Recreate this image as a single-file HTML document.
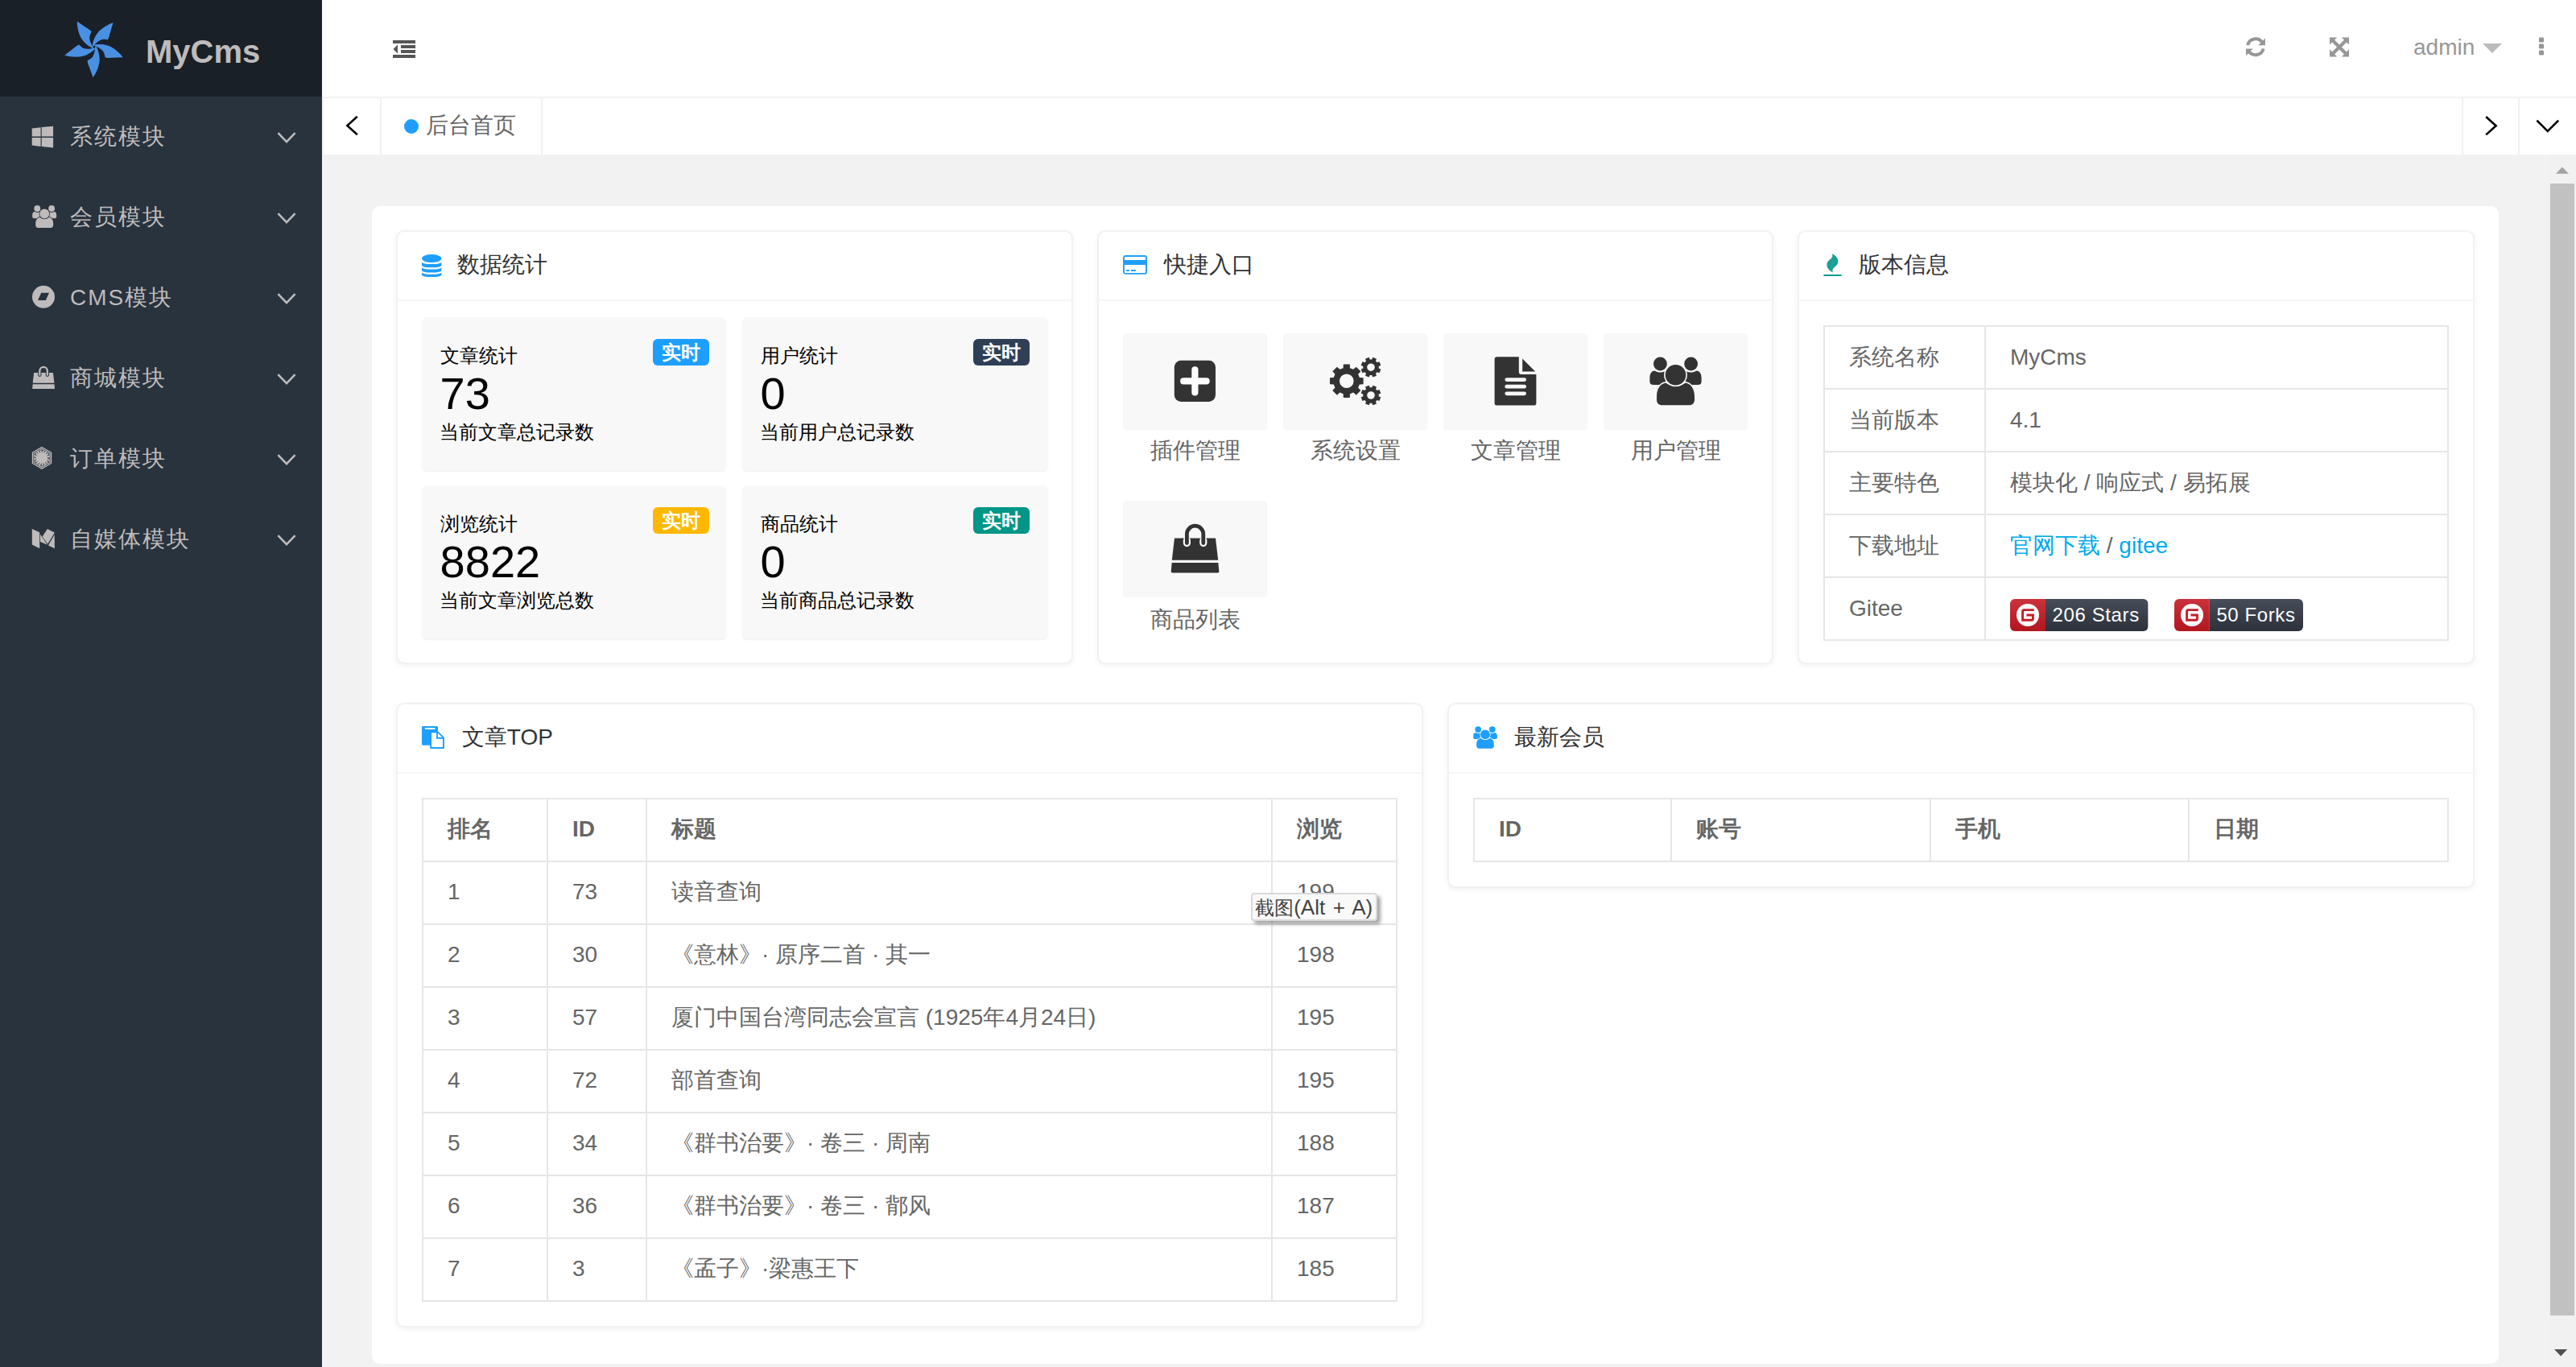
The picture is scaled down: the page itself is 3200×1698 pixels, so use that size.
<!DOCTYPE html>
<html><head><meta charset="utf-8">
<style>
*{box-sizing:border-box;margin:0;padding:0}
html,body{width:1600px;height:849px;overflow:hidden;font-family:"Liberation Sans",sans-serif;background:#f2f2f2}
.abs{position:absolute}
svg{display:block;position:absolute;overflow:visible}
#side{position:absolute;left:0;top:0;width:200px;height:849px;background:#28333E}
#logo{position:absolute;left:0;top:0;width:200px;height:60px;background:#192027}
#logo .t{position:absolute;left:90.5px;top:20.5px;font-size:20px;font-weight:bold;color:rgb(191,187,187);line-height:23px}
.mi{position:absolute;left:0;width:200px;height:50px}
.mi .t{position:absolute;left:43.5px;top:0;line-height:50px;font-size:14px;letter-spacing:1px;color:rgb(191,187,187);white-space:nowrap}
#header{position:absolute;left:200px;top:0;width:1400px;height:61px;background:#fff;border-bottom:1px solid #f2f2f2}
#admin{position:absolute;left:1299px;top:21.5px;font-size:14px;color:#979797;line-height:16px}
#tabs{position:absolute;left:200px;top:61px;width:1400px;height:35px;background:#fff;border-left:1px solid #f2f2f2}
.tabtxt{position:absolute;left:264.5px;top:69px;font-size:14px;color:#666;line-height:18px;white-space:nowrap}
#outer{position:absolute;left:231px;top:128px;width:1321px;height:719px;background:#fff;border-radius:5px}
.card{position:absolute;background:#fff;border:1px solid #f2f2f2;border-radius:5px;box-shadow:0 1px 3px 0 rgba(0,0,0,.06)}
.card .hd{position:absolute;left:0;top:0;right:0;height:43px;border-bottom:1px solid #f6f6f6}
.card .ht{position:absolute;top:-0.5px;line-height:42px;font-size:14px;color:#333;white-space:nowrap}
.box{position:absolute;background:#f8f8f8;border-radius:3px;box-shadow:0 1px 1px rgba(0,0,0,.05)}
.box .a{position:absolute;left:11.4px;top:15.4px;font-size:12px;line-height:17px;color:#000;white-space:nowrap}
.box .n{position:absolute;left:11.3px;top:31.4px;font-size:28px;line-height:32px;color:#000;white-space:nowrap}
.box .d{position:absolute;left:10.9px;top:63.1px;font-size:12px;line-height:17px;color:#000;white-space:nowrap}
.badge{position:absolute;top:13px;left:143px;width:35px;height:16.5px;border-radius:3px;color:#fff;font-size:12px;font-weight:bold;line-height:17px;text-align:center;transform:translate(0.5px,0.5px)}
.q{position:absolute;width:89.5px;height:60px;background:#f8f8f8;border-radius:2px}
.ql{position:absolute;width:89.5px;text-align:center;font-size:14px;color:#666;line-height:20px;white-space:nowrap}
table{border-collapse:separate;border-spacing:0;position:absolute;table-layout:fixed;border-left:1px solid transparent;border-top:1px solid transparent}
td,th{border-right:1px solid transparent;border-bottom:1px solid transparent;padding:9px 15px;line-height:20px;font-size:14px;color:#666;text-align:left;white-space:nowrap;overflow:visible;font-weight:normal;height:39px}
th{font-weight:bold}
a{color:#01AAED;text-decoration:none}
.gbt{font-size:12px;letter-spacing:0.3px;color:#fff;line-height:14px;white-space:nowrap}
.tip{left:776.8px;top:554.3px;width:78.6px;height:17.5px;background:#f9f9f9;border:1px solid #d9d9d9;border-radius:2px;box-shadow:2px 2px 2px rgba(0,0,0,.35);font-size:13px;color:#444;line-height:16.5px;padding-left:1.8px;word-spacing:1.2px;white-space:nowrap}
@media (min-width:2400px){html{zoom:2}}
#sb{position:absolute;left:1583px;top:96px;width:17px;height:753px;background:#f1f1f1}
</style></head><body>

<!-- SIDEBAR -->
<div id="side">
  <div id="logo">
    <div class="t">MyCms</div>
<svg style="left:38px;top:9px" width="42" height="42" viewBox="-20.48 -20.08 42 42"><g fill="#4A90E2"><path transform="rotate(20.25)" d="M-0.94,-0.77 C1.4,-2.5 5.2,-3.75 8.41,-3.69 C11.6,-3.65 16.3,-2 19.09,0 L14.77,1.66 L10.32,3.56 L8.61,3.86 C8.1,2.6 7,1.2 6.06,0.6 C4.5,-0.3 1.5,-0.7 -0.94,-0.77Z"/><path transform="rotate(92.25)" d="M-0.94,-0.77 C1.4,-2.5 5.2,-3.75 8.41,-3.69 C11.6,-3.65 16.3,-2 19.09,0 L14.77,1.66 L10.32,3.56 L8.61,3.86 C8.1,2.6 7,1.2 6.06,0.6 C4.5,-0.3 1.5,-0.7 -0.94,-0.77Z"/><path transform="rotate(164.25)" d="M-0.94,-0.77 C1.4,-2.5 5.2,-3.75 8.41,-3.69 C11.6,-3.65 16.3,-2 19.09,0 L14.77,1.66 L10.32,3.56 L8.61,3.86 C8.1,2.6 7,1.2 6.06,0.6 C4.5,-0.3 1.5,-0.7 -0.94,-0.77Z"/><path transform="rotate(236.25)" d="M-0.94,-0.77 C1.4,-2.5 5.2,-3.75 8.41,-3.69 C11.6,-3.65 16.3,-2 19.09,0 L14.77,1.66 L10.32,3.56 L8.61,3.86 C8.1,2.6 7,1.2 6.06,0.6 C4.5,-0.3 1.5,-0.7 -0.94,-0.77Z"/><path transform="rotate(308.25)" d="M-0.94,-0.77 C1.4,-2.5 5.2,-3.75 8.41,-3.69 C11.6,-3.65 16.3,-2 19.09,0 L14.77,1.66 L10.32,3.56 L8.61,3.86 C8.1,2.6 7,1.2 6.06,0.6 C4.5,-0.3 1.5,-0.7 -0.94,-0.77Z"/></g></svg>
  </div>
  <div class="mi" style="top:60px"><div class="t">系统模块</div></div>
  <div class="mi" style="top:110px"><div class="t">会员模块</div></div>
  <div class="mi" style="top:160px"><div class="t">CMS模块</div></div>
  <div class="mi" style="top:210px"><div class="t">商城模块</div></div>
  <div class="mi" style="top:260px"><div class="t">订单模块</div></div>
  <div class="mi" style="top:310px"><div class="t">自媒体模块</div></div>
<svg style="left:19px;top:78px;transform:translate(0.85px,0.35px)" width="13.2" height="13.4" viewBox="0 0 26.4 26.8" ><g fill="rgb(191,187,187)"><path d="M0,2.8 L10.9,1.5 L10.9,12.8 L0,12.8Z"/><path d="M12,1.35 L26.4,0 L26.4,12.8 L12,12.8Z"/><path d="M0,14.3 L10.9,14.3 L10.9,25.2 L0,23.8Z"/><path d="M12,14.3 L26.4,14.3 L26.4,26.8 L12,25.3Z"/></g></svg><svg style="left:20px;top:127px;transform:translate(0px,0.3px)" width="15.2" height="14.3" viewBox="0 0 32.5 30" ><g fill="rgb(191,187,187)"><circle cx="6.7" cy="4.4" r="4.2"/><circle cx="25.8" cy="4.4" r="4.2"/><path d="M0.2,13 C0.2,10.3 1.6,8.7 3.4,8.7 C4.4,9.4 5.5,9.7 6.7,9.7 C7.9,9.7 9,9.4 10,8.7 L10,17.4 L2.4,17.4 C1,17.4 0.2,16.6 0.2,15.4 Z"/><path d="M32.3,13 C32.3,10.3 30.9,8.7 29.1,8.7 C28.1,9.4 27,9.7 25.8,9.7 C24.6,9.7 23.5,9.4 22.5,8.7 L22.5,17.4 L30.1,17.4 C31.5,17.4 32.3,16.6 32.3,15.4 Z"/></g><g fill="rgb(191,187,187)" stroke="#28333E" stroke-width="1.6" paint-order="stroke fill"><path d="M4.5,24.6 C4.5,19.6 7.2,16.3 10.3,16.3 C12,17.6 14.1,18.4 16.25,18.4 C18.4,18.4 20.5,17.6 22.2,16.3 C25.3,16.3 28,19.6 28,24.6 L28,26.6 C28,28.7 26.7,30 24.6,30 L7.9,30 C5.8,30 4.5,28.7 4.5,26.6 Z"/><circle cx="16.25" cy="11.3" r="6.4"/></g></svg><svg style="left:20px;top:177px;transform:translate(0px,0.4px)" width="14" height="14" viewBox="0 0 14 14" ><circle cx="7" cy="7" r="7" fill="rgb(191,187,187)"/><path fill="#28333E" d="M5.6,4.5 L10.5,4.5 L8.4,9.1 L3.5,9.1Z"/></svg><svg style="left:20px;top:227px;transform:translate(0px,0.5px)" width="14.1" height="14" viewBox="0 0 30 30" ><path fill="rgb(191,187,187)" d="M2.2,8.6 L27.7,8.6 L29.3,22.2 L0.6,22.2 Z"/><path fill="rgb(191,187,187)" d="M0.55,23.8 L29.35,23.8 L29.9,29.2 Q29.95,30 29.1,30 L0.8,30 Q0,30 0.05,29.2 Z"/><path fill="none" stroke="#28333E" stroke-width="4.6" stroke-linecap="round" d="M9.9,11.6 L9.9,10"/><path fill="none" stroke="#28333E" stroke-width="4.6" stroke-linecap="round" d="M20.1,11.6 L20.1,10"/><path fill="none" stroke="rgb(191,187,187)" stroke-width="2.4" stroke-linecap="round" d="M9.9,11.6 L9.9,6 A5.1,5.1 0 0 1 20.1,6 L20.1,11.6"/></svg><svg style="left:20px;top:277px;transform:translate(0px,0.4px)" width="12" height="14" viewBox="0 0 12 14" ><path fill="none" stroke="rgb(191,187,187)" stroke-width="0.6" d="M6,0.3 L11.8,3.65 L11.8,10.35 L6,13.7 L0.2,10.35 L0.2,3.65Z"/><path fill="none" stroke="rgb(191,187,187)" stroke-width="0.6" d="M6,1.3 L10.94,4.15 L10.94,9.85 L6,12.7 L1.06,9.85 L1.06,4.15Z"/><circle cx="6" cy="7" r="4.8" fill="rgb(191,187,187)"/><g stroke="#28333E" stroke-width="0.45"><line x1="9.47" y1="7.49" x2="10.95" y2="7.7"/><line x1="9.03" y1="8.75" x2="10.33" y2="9.5"/><line x1="8.15" y1="9.76" x2="9.08" y2="10.94"/><line x1="6.96" y1="10.36" x2="7.38" y2="11.81"/><line x1="5.63" y1="10.48" x2="5.48" y2="11.97"/><line x1="4.36" y1="10.09" x2="3.65" y2="11.41"/><line x1="3.32" y1="9.25" x2="2.17" y2="10.21"/><line x1="2.67" y1="8.08" x2="1.24" y2="8.55"/><line x1="2.51" y1="6.76" x2="1.01" y2="6.65"/><line x1="2.85" y1="5.47" x2="1.51" y2="4.81"/><line x1="3.66" y1="4.4" x2="2.65" y2="3.28"/><line x1="4.8" y1="3.71" x2="4.29" y2="2.3"/><line x1="6.12" y1="3.5" x2="6.17" y2="2"/><line x1="7.42" y1="3.8" x2="8.03" y2="2.43"/><line x1="8.52" y1="4.57" x2="9.6" y2="3.53"/><line x1="9.25" y1="5.69" x2="10.64" y2="5.13"/><line x1="9.5" y1="7" x2="11" y2="7"/></g></svg><svg style="left:19px;top:328px;transform:translate(0.8px,0.4px)" width="14.25" height="12.3" viewBox="0 0 28.5 24.6" ><g fill="rgb(191,187,187)"><path d="M0.2,0.2 L9.6,4.4 L9.6,24.4 L0.2,19.8Z"/><path d="M10.3,6.6 L19.3,19.9 L10.5,16.2Z"/><path d="M19.3,0.2 L28.3,4.6 L19.7,18.9 L13,9.6Z"/><path d="M28.1,7.2 L28.3,24.4 L20.4,20.6Z"/></g></svg><svg style="left:172px;top:82px;transform:translate(0.7px,0.6px)" width="10.6" height="5.5" viewBox="0 0 10.6 5.5" ><path fill="none" stroke="rgb(191,187,187)" stroke-width="1.3" d="M0,0 L5.3,5.5 L10.6,0"/></svg><svg style="left:172px;top:132px;transform:translate(0.7px,0.6px)" width="10.6" height="5.5" viewBox="0 0 10.6 5.5" ><path fill="none" stroke="rgb(191,187,187)" stroke-width="1.3" d="M0,0 L5.3,5.5 L10.6,0"/></svg><svg style="left:172px;top:182px;transform:translate(0.7px,0.6px)" width="10.6" height="5.5" viewBox="0 0 10.6 5.5" ><path fill="none" stroke="rgb(191,187,187)" stroke-width="1.3" d="M0,0 L5.3,5.5 L10.6,0"/></svg><svg style="left:172px;top:232px;transform:translate(0.7px,0.6px)" width="10.6" height="5.5" viewBox="0 0 10.6 5.5" ><path fill="none" stroke="rgb(191,187,187)" stroke-width="1.3" d="M0,0 L5.3,5.5 L10.6,0"/></svg><svg style="left:172px;top:282px;transform:translate(0.7px,0.6px)" width="10.6" height="5.5" viewBox="0 0 10.6 5.5" ><path fill="none" stroke="rgb(191,187,187)" stroke-width="1.3" d="M0,0 L5.3,5.5 L10.6,0"/></svg><svg style="left:172px;top:332px;transform:translate(0.7px,0.6px)" width="10.6" height="5.5" viewBox="0 0 10.6 5.5" ><path fill="none" stroke="rgb(191,187,187)" stroke-width="1.3" d="M0,0 L5.3,5.5 L10.6,0"/></svg>
</div>

<!-- HEADER -->
<div id="header">
  <div id="admin">admin</div>
</div>

<!-- TABS -->
<div id="tabs"></div>
<div class="abs" style="left:236px;top:61px;width:1px;height:35px;background:#f2f2f2"></div>
<div class="abs" style="left:336px;top:61px;width:1px;height:35px;background:#f2f2f2"></div>
<div class="abs" style="left:1529px;top:61px;width:1px;height:35px;background:#f2f2f2"></div>
<div class="abs" style="left:1564px;top:61px;width:1px;height:35px;background:#f2f2f2"></div>
<div class="abs" style="left:251px;top:74px;width:9px;height:9px;border-radius:50%;background:#1e9fff"></div>
<div class="tabtxt">后台首页</div>

<!-- CONTENT -->
<div id="outer"></div>

<!-- card 1 -->
<div class="card" style="left:246px;top:143px;width:420.3px;height:269.6px">
  <div class="hd"></div>
  <div class="ht" style="left:37px">数据统计</div>
</div>
<div class="box" style="left:262px;top:197px;width:189px;height:95px">
  <div class="a">文章统计</div><div class="n">73</div><div class="d">当前文章总记录数</div>
  <div class="badge" style="background:#1E9FFF">实时</div>
</div>
<div class="box" style="left:461px;top:197px;width:190px;height:95px">
  <div class="a">用户统计</div><div class="n">0</div><div class="d">当前用户总记录数</div>
  <div class="badge" style="background:#2F4056">实时</div>
</div>
<div class="box" style="left:262px;top:302px;width:189px;height:95px;transform:translateY(-0.5px)">
  <div class="a">浏览统计</div><div class="n">8822</div><div class="d">当前文章浏览总数</div>
  <div class="badge" style="background:#FFB800">实时</div>
</div>
<div class="box" style="left:461px;top:302px;width:190px;height:95px;transform:translateY(-0.5px)">
  <div class="a">商品统计</div><div class="n">0</div><div class="d">当前商品总记录数</div>
  <div class="badge" style="background:#009688">实时</div>
</div>

<!-- card 2 -->
<div class="card" style="left:681.3px;top:143px;width:420.4px;height:269.6px">
  <div class="hd"></div>
  <div class="ht" style="left:40.9px">快捷入口</div>
</div>
<div class="q" style="left:697.5px;top:207px"></div>
<div class="q" style="left:797px;top:207px"></div>
<div class="q" style="left:896.5px;top:207px"></div>
<div class="q" style="left:996px;top:207px"></div>
<div class="q" style="left:697.5px;top:311px"></div>
<div class="ql" style="left:697.5px;top:270px">插件管理</div>
<div class="ql" style="left:797px;top:270px">系统设置</div>
<div class="ql" style="left:896.5px;top:270px">文章管理</div>
<div class="ql" style="left:996px;top:270px">用户管理</div>
<div class="ql" style="left:697.5px;top:375px">商品列表</div>

<!-- card 3 -->
<div class="card" style="left:1116.7px;top:143px;width:420.3px;height:269.6px">
  <div class="hd"></div>
  <div class="ht" style="left:36.6px">版本信息</div>
</div>
<table style="left:1132.5px;top:202px;width:389px">
  <colgroup><col style="width:100px"><col style="width:288px"></colgroup>
  <tr><td>系统名称</td><td>MyCms</td></tr>
  <tr><td>当前版本</td><td>4.1</td></tr>
  <tr><td>主要特色</td><td>模块化 / 响应式 / 易拓展</td></tr>
  <tr><td>下载地址</td><td><a>官网下载</a> / <a>gitee</a></td></tr>
  <tr><td>Gitee</td><td></td></tr>
</table>

<!-- card 4 -->
<div class="card" style="left:246px;top:436px;width:638px;height:388px;transform:translateY(0.5px)">
  <div class="hd"></div>
  <div class="ht" style="left:39.9px">文章TOP</div>
</div>
<table style="left:262px;top:495px;width:606.5px">
  <colgroup><col style="width:77.5px"><col style="width:61.5px"><col style="width:388.5px"><col style="width:78px"></colgroup>
  <tr><th>排名</th><th>ID</th><th>标题</th><th>浏览</th></tr>
  <tr><td>1</td><td>73</td><td>读音查询</td><td>199</td></tr>
  <tr><td>2</td><td>30</td><td>《意林》· 原序二首 · 其一</td><td>198</td></tr>
  <tr><td>3</td><td>57</td><td>厦门中国台湾同志会宣言 (1925年4月24日)</td><td>195</td></tr>
  <tr><td>4</td><td>72</td><td>部首查询</td><td>195</td></tr>
  <tr><td>5</td><td>34</td><td>《群书治要》· 卷三 · 周南</td><td>188</td></tr>
  <tr><td>6</td><td>36</td><td>《群书治要》· 卷三 · 鄁风</td><td>187</td></tr>
  <tr><td>7</td><td>3</td><td>《孟子》·梁惠王下</td><td>185</td></tr>
</table>

<!-- card 5 -->
<div class="card" style="left:899px;top:436px;width:638px;height:115px;transform:translateY(0.5px)">
  <div class="hd"></div>
  <div class="ht" style="left:40.5px">最新会员</div>
</div>
<table style="left:915px;top:495px;width:606px">
  <colgroup><col style="width:122.5px"><col style="width:161px"><col style="width:160.5px"><col style="width:161px"></colgroup>
  <tr><th>ID</th><th>账号</th><th>手机</th><th>日期</th></tr>
</table>

<svg style="left:262px;top:495px" width="606" height="314" viewBox="0 0 1212 628" shape-rendering="crispEdges"><g fill="#e6e6e6"><rect x="0" y="1" width="2" height="626"/><rect x="155" y="1" width="2" height="626"/><rect x="278" y="1" width="2" height="626"/><rect x="1055" y="1" width="2" height="626"/><rect x="1210" y="1" width="2" height="626"/><rect x="0" y="1" width="1212" height="2"/><rect x="0" y="79" width="1212" height="2"/><rect x="0" y="157" width="1212" height="2"/><rect x="0" y="235" width="1212" height="2"/><rect x="0" y="313" width="1212" height="2"/><rect x="0" y="391" width="1212" height="2"/><rect x="0" y="469" width="1212" height="2"/><rect x="0" y="547" width="1212" height="2"/><rect x="0" y="625" width="1212" height="2"/></g></svg><svg style="left:915px;top:495px" width="606" height="41" viewBox="0 0 1212 82" shape-rendering="crispEdges"><g fill="#e6e6e6"><rect x="0" y="1" width="2" height="80"/><rect x="245" y="1" width="2" height="80"/><rect x="567" y="1" width="2" height="80"/><rect x="888" y="1" width="2" height="80"/><rect x="1210" y="1" width="2" height="80"/><rect x="0" y="1" width="1212" height="2"/><rect x="0" y="79" width="1212" height="2"/></g></svg><svg style="left:1132px;top:202px" width="389" height="196" viewBox="0 0 778 392" shape-rendering="crispEdges"><g fill="#e6e6e6"><rect x="1" y="0" width="2" height="392"/><rect x="201" y="0" width="2" height="392"/><rect x="776" y="0" width="2" height="392"/><rect x="1" y="0" width="777" height="2"/><rect x="1" y="78" width="777" height="2"/><rect x="1" y="156" width="777" height="2"/><rect x="1" y="234" width="777" height="2"/><rect x="1" y="312" width="777" height="2"/><rect x="1" y="390" width="777" height="2"/></g></svg>
<svg style="left:262px;top:158px" width="12.2" height="14.1" viewBox="0 0 12.2 14.1" ><g fill="#1E9FFF"><ellipse cx="6.1" cy="2.55" rx="6.1" ry="2.5"/><path d="M0,4.75 C0,5.59 2.75,6.05 6.1,6.05 C9.45,6.05 12.2,5.59 12.2,4.75 L12.2,6.85 C12.2,7.69 9.45,8.15 6.1,8.15 C2.75,8.15 0,7.69 0,6.85Z"/><path d="M0,8 C0,8.85 2.75,9.3 6.1,9.3 C9.45,9.3 12.2,8.85 12.2,8 L12.2,10 C12.2,10.85 9.45,11.3 6.1,11.3 C2.75,11.3 0,10.85 0,10Z"/><path d="M0,11.1 C0,11.95 2.75,12.4 6.1,12.4 C9.45,12.4 12.2,11.95 12.2,11.1 L12.2,12.75 C12.2,13.6 9.45,14.05 6.1,14.05 C2.75,14.05 0,13.6 0,12.75Z"/></g></svg><svg style="left:697px;top:158px;transform:translate(0.5px,0.5px)" width="15" height="12" viewBox="0 0 15 12" ><rect x="0.48" y="0.48" width="14.04" height="10.94" rx="1.1" fill="none" stroke="#1E9FFF" stroke-width="0.96"/><rect x="0" y="3" width="15" height="3" fill="#1E9FFF"/><g stroke="#1E9FFF" stroke-width="1" stroke-linecap="round"><line x1="2.4" y1="9.5" x2="3.6" y2="9.5"/><line x1="5.4" y1="9.5" x2="7.6" y2="9.5"/></g></svg><svg style="left:1132px;top:157px;transform:translate(0.6px,0.3px)" width="11.3" height="14.3" viewBox="0 0 11.3 14.3" ><g fill="#1aa094"><path d="M5.4,0.3 C7.6,1.3 9.1,2.9 9.1,5.1 C9.1,7.5 6.9,8.3 6,9.6 C5.5,10.4 5.6,11.3 5.9,12 C3.8,11 2.1,9.4 2.1,7.1 C2.1,4.8 4.5,4 5.3,2.6 C5.7,1.9 5.6,1 5.4,0.3Z"/></g><rect x="0.1" y="13.2" width="11.1" height="0.95" fill="#009688"/></svg><svg style="left:262px;top:451px" width="14" height="14" viewBox="0 0 14 14" ><rect x="0" y="0" width="10" height="11.9" rx="0.7" fill="#1E9FFF"/><rect x="1.9" y="1" width="6.3" height="1" fill="#fff"/><path d="M5.55,3.7 L10,3.7 L13.5,7.2 L13.5,13.5 L5.55,13.5Z" fill="#fff" stroke="#1E9FFF" stroke-width="0.95" stroke-linejoin="round"/><path d="M9.5,3.7 L9.5,7.4 L13.5,7.4" fill="none" stroke="#1E9FFF" stroke-width="0.95"/></svg><svg style="left:915px;top:450px;transform:translate(0px,0.9px)" width="15" height="14" viewBox="0 0 32.5 30" ><g fill="#1E9FFF"><circle cx="6.7" cy="4.4" r="4.2"/><circle cx="25.8" cy="4.4" r="4.2"/><path d="M0.2,13 C0.2,10.3 1.6,8.7 3.4,8.7 C4.4,9.4 5.5,9.7 6.7,9.7 C7.9,9.7 9,9.4 10,8.7 L10,17.4 L2.4,17.4 C1,17.4 0.2,16.6 0.2,15.4 Z"/><path d="M32.3,13 C32.3,10.3 30.9,8.7 29.1,8.7 C28.1,9.4 27,9.7 25.8,9.7 C24.6,9.7 23.5,9.4 22.5,8.7 L22.5,17.4 L30.1,17.4 C31.5,17.4 32.3,16.6 32.3,15.4 Z"/></g><g fill="#1E9FFF" stroke="#fff" stroke-width="1.6" paint-order="stroke fill"><path d="M4.5,24.6 C4.5,19.6 7.2,16.3 10.3,16.3 C12,17.6 14.1,18.4 16.25,18.4 C18.4,18.4 20.5,17.6 22.2,16.3 C25.3,16.3 28,19.6 28,24.6 L28,26.6 C28,28.7 26.7,30 24.6,30 L7.9,30 C5.8,30 4.5,28.7 4.5,26.6 Z"/><circle cx="16.25" cy="11.3" r="6.4"/></g></svg>
<svg style="left:729px;top:223px;transform:translate(0.4px,0.9px)" width="25.6" height="25.6" viewBox="0 0 25.6 25.6" ><rect x="0" y="0" width="25.6" height="25.6" rx="4.2" fill="#333"/><g stroke="#fff" stroke-width="4.1" stroke-linecap="round"><line x1="5.7" y1="12.8" x2="19.9" y2="12.8"/><line x1="12.8" y1="5.8" x2="12.8" y2="19.8"/></g></svg><svg style="left:825px;top:222px;transform:translate(0.8px,0px)" width="32.2" height="29.6" viewBox="0 0 32.2 29.6" ><path fill="#333" fill-rule="evenodd" d="M8.5,6.57 L8.61,4.19 L12.59,4.19 L12.7,6.57 L14.79,7.43 L16.56,5.83 L19.37,8.64 L17.77,10.41 L18.63,12.5 L21.01,12.61 L21.01,16.59 L18.63,16.7 L17.77,18.79 L19.37,20.56 L16.56,23.37 L14.79,21.77 L12.7,22.63 L12.59,25.01 L8.61,25.01 L8.5,22.63 L6.41,21.77 L4.64,23.37 L1.83,20.56 L3.43,18.79 L2.57,16.7 L0.19,16.59 L0.19,12.61 L2.57,12.5 L3.43,10.41 L1.83,8.64 L4.64,5.83 L6.41,7.43ZM15,14.6 A4.4,4.4 0 1 0 6.2,14.6 A4.4,4.4 0 1 0 15,14.6ZM26.31,1.24 L26.93,-0.08 L29.2,0.86 L28.7,2.23 L29.57,3.1 L30.94,2.6 L31.88,4.87 L30.56,5.49 L30.56,6.71 L31.88,7.33 L30.94,9.6 L29.57,9.1 L28.7,9.97 L29.2,11.34 L26.93,12.28 L26.31,10.96 L25.09,10.96 L24.47,12.28 L22.2,11.34 L22.7,9.97 L21.83,9.1 L20.46,9.6 L19.52,7.33 L20.84,6.71 L20.84,5.49 L19.52,4.87 L20.46,2.6 L21.83,3.1 L22.7,2.23 L22.2,0.86 L24.47,-0.08 L25.09,1.24ZM28.1,6.1 A2.4,2.4 0 1 0 23.3,6.1 A2.4,2.4 0 1 0 28.1,6.1ZM26.31,18.64 L26.93,17.32 L29.2,18.26 L28.7,19.63 L29.57,20.5 L30.94,20 L31.88,22.27 L30.56,22.89 L30.56,24.11 L31.88,24.73 L30.94,27 L29.57,26.5 L28.7,27.37 L29.2,28.74 L26.93,29.68 L26.31,28.36 L25.09,28.36 L24.47,29.68 L22.2,28.74 L22.7,27.37 L21.83,26.5 L20.46,27 L19.52,24.73 L20.84,24.11 L20.84,22.89 L19.52,22.27 L20.46,20 L21.83,20.5 L22.7,19.63 L22.2,18.26 L24.47,17.32 L25.09,18.64ZM28.1,23.5 A2.4,2.4 0 1 0 23.3,23.5 A2.4,2.4 0 1 0 28.1,23.5Z"/></svg><svg style="left:928px;top:221px;transform:translate(0.3px,0.6px)" width="25.9" height="30.2" viewBox="0 0 25.9 30.2" ><path fill="#333" d="M1.6,0 L15.1,0 L15.1,9.3 Q15.1,10.9 16.7,10.9 L25.9,10.9 L25.9,28.6 Q25.9,30.2 24.3,30.2 L1.6,30.2 Q0,30.2 0,28.6 L0,1.6 Q0,0 1.6,0Z"/><path fill="#333" d="M17.3,1.2 L25.3,9.1 L17.3,9.1Z"/><g stroke="#f8f8f8" stroke-width="2.4" stroke-linecap="round"><line x1="7.6" y1="14.2" x2="18.5" y2="14.2"/><line x1="7.6" y1="18.5" x2="18.5" y2="18.5"/><line x1="7.6" y1="22.8" x2="18.5" y2="22.8"/></g></svg><svg style="left:1024px;top:221px;transform:translate(0.5px,0.6px)" width="32.5" height="30" viewBox="0 0 32.5 30" ><g fill="#333"><circle cx="6.7" cy="4.4" r="4.2"/><circle cx="25.8" cy="4.4" r="4.2"/><path d="M0.2,13 C0.2,10.3 1.6,8.7 3.4,8.7 C4.4,9.4 5.5,9.7 6.7,9.7 C7.9,9.7 9,9.4 10,8.7 L10,17.4 L2.4,17.4 C1,17.4 0.2,16.6 0.2,15.4 Z"/><path d="M32.3,13 C32.3,10.3 30.9,8.7 29.1,8.7 C28.1,9.4 27,9.7 25.8,9.7 C24.6,9.7 23.5,9.4 22.5,8.7 L22.5,17.4 L30.1,17.4 C31.5,17.4 32.3,16.6 32.3,15.4 Z"/></g><g fill="#333" stroke="#f8f8f8" stroke-width="1.6" paint-order="stroke fill"><path d="M4.5,24.6 C4.5,19.6 7.2,16.3 10.3,16.3 C12,17.6 14.1,18.4 16.25,18.4 C18.4,18.4 20.5,17.6 22.2,16.3 C25.3,16.3 28,19.6 28,24.6 L28,26.6 C28,28.7 26.7,30 24.6,30 L7.9,30 C5.8,30 4.5,28.7 4.5,26.6 Z"/><circle cx="16.25" cy="11.3" r="6.4"/></g></svg><svg style="left:727px;top:325px;transform:translate(0.3px,0.7px)" width="30" height="30" viewBox="0 0 30 30" ><path fill="#333" d="M2.2,8.6 L27.7,8.6 L29.3,22.2 L0.6,22.2 Z"/><path fill="#333" d="M0.55,23.8 L29.35,23.8 L29.9,29.2 Q29.95,30 29.1,30 L0.8,30 Q0,30 0.05,29.2 Z"/><path fill="none" stroke="#f8f8f8" stroke-width="4.6" stroke-linecap="round" d="M9.9,11.6 L9.9,10"/><path fill="none" stroke="#f8f8f8" stroke-width="4.6" stroke-linecap="round" d="M20.1,11.6 L20.1,10"/><path fill="none" stroke="#333" stroke-width="2.4" stroke-linecap="round" d="M9.9,11.6 L9.9,6 A5.1,5.1 0 0 1 20.1,6 L20.1,11.6"/></svg>
<svg style="left:1248px;top:372px;transform:translateX(0.5px)" width="85.8" height="20" viewBox="0 0 85.8 20"><defs><linearGradient id="rg1248" x1="0" y1="0" x2="0" y2="1"><stop offset="0" stop-color="#cb323b"/><stop offset="1" stop-color="#b2161f"/></linearGradient><linearGradient id="dg1248" x1="0" y1="0" x2="0" y2="1"><stop offset="0" stop-color="#474d59"/><stop offset="1" stop-color="#2c313b"/></linearGradient><clipPath id="cg1248"><rect width="85.8" height="20" rx="3"/></clipPath></defs><g clip-path="url(#cg1248)"><rect width="22" height="20" fill="url(#rg1248)"/><rect x="22" width="63.8" height="20" fill="url(#dg1248)"/></g><circle cx="11" cy="10" r="7" fill="#fff"/><path fill="none" stroke="#c41f27" stroke-width="1.45" d="M14.9,6.8 L8.6,6.8 Q7.8,6.8 7.8,7.6 L7.8,13.15 L13.4,13.15 Q14.2,13.15 14.2,12.35 L14.2,10 L10.2,10"/></svg><div class="abs gbt" style="left:1274px;top:375px;transform:translateX(0.8px)">206 Stars</div><svg style="left:1350px;top:372px;transform:translateX(0.5px)" width="80" height="20" viewBox="0 0 80 20"><defs><linearGradient id="rg1350" x1="0" y1="0" x2="0" y2="1"><stop offset="0" stop-color="#cb323b"/><stop offset="1" stop-color="#b2161f"/></linearGradient><linearGradient id="dg1350" x1="0" y1="0" x2="0" y2="1"><stop offset="0" stop-color="#474d59"/><stop offset="1" stop-color="#2c313b"/></linearGradient><clipPath id="cg1350"><rect width="80" height="20" rx="3"/></clipPath></defs><g clip-path="url(#cg1350)"><rect width="21.9" height="20" fill="url(#rg1350)"/><rect x="21.9" width="58.1" height="20" fill="url(#dg1350)"/></g><circle cx="11" cy="10" r="7" fill="#fff"/><path fill="none" stroke="#c41f27" stroke-width="1.45" d="M14.9,6.8 L8.6,6.8 Q7.8,6.8 7.8,7.6 L7.8,13.15 L13.4,13.15 Q14.2,13.15 14.2,12.35 L14.2,10 L10.2,10"/></svg><div class="abs gbt" style="left:1376px;top:375px;transform:translateX(0.7px)">50 Forks</div>
<div class="abs tip"><span style="font-size:12px">截图</span>(Alt + A)</div>
<svg style="left:244px;top:25px" width="14" height="11" viewBox="0 0 28 22" ><g fill="#565656"><rect x="0" y="0" width="28" height="4"/><rect x="10" y="6" width="18" height="4"/><rect x="10" y="12" width="18" height="4"/><rect x="0" y="18" width="28" height="4"/><path d="M0.5,11 L6,5.6 L6,16.4Z"/></g></svg><svg style="left:1395px;top:23px;transform:translate(0px,0.1px)" width="12" height="12" viewBox="0 0 12 12" ><g fill="#979797"><path d="M11.96,0.6 L11.96,4.97 L7.6,4.97Z"/><path d="M0,7.14 L4.35,7.14 L0,11.5Z"/></g><g fill="none" stroke="#979797" stroke-width="2"><path d="M1.07,5 A5,5 0 0 1 10.1,3.2"/><path d="M10.85,7.1 A5,5 0 0 1 1.9,8.9"/></g></svg><svg style="left:1447px;top:23px;transform:translate(0px,0.2px)" width="12" height="12" viewBox="0 0 12 12" ><g fill="#979797"><path d="M0,0 L4.6,0 L0,4.6Z"/><path d="M12,0 L7.4,0 L12,4.6Z"/><path d="M0,12 L4.6,12 L0,7.4Z"/><path d="M12,12 L7.4,12 L12,7.4Z"/></g><g stroke="#979797" stroke-width="2.1"><line x1="2" y1="2" x2="10" y2="10"/><line x1="10" y1="2" x2="2" y2="10"/></g></svg><svg style="left:1542px;top:27px" width="12" height="6" viewBox="0 0 12 6" ><path fill="#bcbcbc" d="M0,0 L12,0 L6,6Z"/></svg><svg style="left:1577px;top:23px;transform:translate(0px,0.2px)" width="3" height="11" viewBox="0 0 3 11" ><g fill="#979797"><rect x="0" y="0" width="3" height="3" rx="0.6"/><rect x="0" y="4" width="3" height="3" rx="0.6"/><rect x="0" y="8" width="3" height="3" rx="0.6"/></g></svg><svg style="left:214px;top:72px;transform:translate(0.5px,0px)" width="8" height="12" viewBox="0 0 8 12" ><path fill="none" stroke="#000" stroke-width="1.3" d="M7.4,0.4 L1.2,6 L7.4,11.6"/></svg><svg style="left:1543px;top:72px;transform:translate(0.5px,0.1px)" width="8" height="12" viewBox="0 0 8 12" ><path fill="none" stroke="#000" stroke-width="1.3" d="M0.6,0.4 L6.8,6 L0.6,11.6"/></svg><svg style="left:1575px;top:74px;transform:translate(0.2px,0.3px)" width="14.4" height="8" viewBox="0 0 14.4 8" ><path fill="none" stroke="#000" stroke-width="1.3" d="M0.5,0.5 L7.2,7.2 L13.9,0.5"/></svg>
<!-- SCROLLBAR -->
<div id="sb"></div>
<svg style="left:1584px;top:114px" width="15" height="703" viewBox="0 0 30 1406"><rect x="0" y="0" width="30" height="1406" fill="#c1c1c1"/></svg>

<svg style="left:1587px;top:103px;transform:translate(0.4px,0.8px)" width="8.1" height="4.1" viewBox="0 0 8.1 4.1" ><path fill="#a3a3a3" d="M0,4.1 L4.05,0 L8.1,4.1Z"/></svg><svg style="left:1586px;top:838px;transform:translate(0.5px,0px)" width="8.1" height="4.2" viewBox="0 0 8.1 4.2" ><path fill="#505050" d="M0,0 L8.1,0 L4.05,4.2Z"/></svg>
</body></html>
